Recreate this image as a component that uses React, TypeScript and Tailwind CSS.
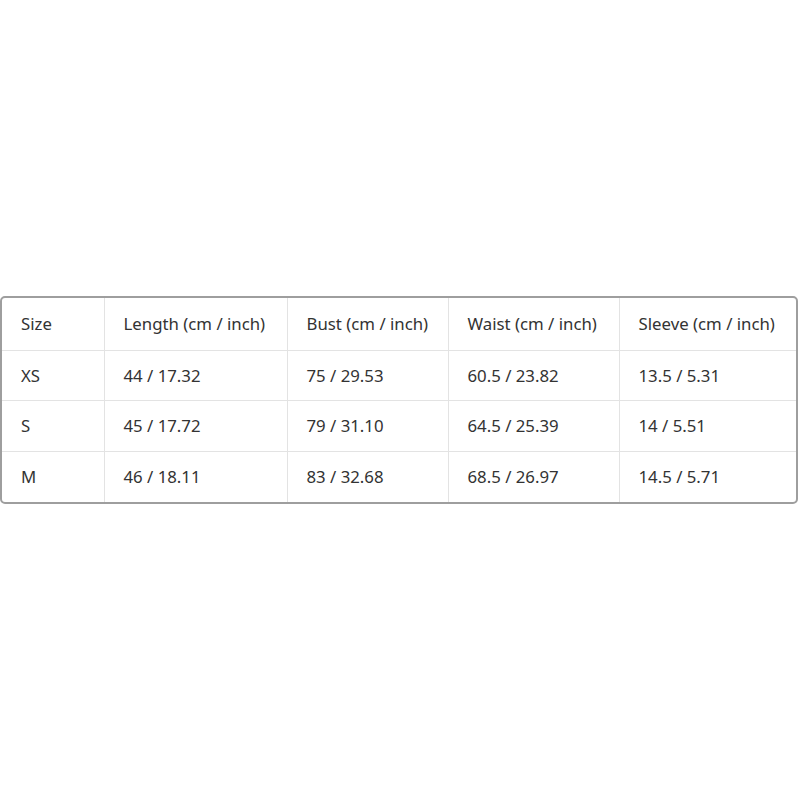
import React from "react";

const headers = ["Size", "Length (cm / inch)", "Bust (cm / inch)", "Waist (cm / inch)", "Sleeve (cm / inch)"];
const rows = [
  ["XS", "44 / 17.32", "75 / 29.53", "60.5 / 23.82", "13.5 / 5.31"],
  ["S", "45 / 17.72", "79 / 31.10", "64.5 / 25.39", "14 / 5.51"],
  ["M", "46 / 18.11", "83 / 32.68", "68.5 / 26.97", "14.5 / 5.71"],
];
const widths = ["w-[102px]", "w-[183px]", "w-[161px]", "w-[171px]", "w-[177px]"];

export default function App() {
  return (
    <div className="w-[800px] h-[800px] bg-white pt-[296px]" style={{ fontFamily: '"Noto Sans", "Open Sans", sans-serif' }}>
      <div className="w-[798px] border-2 border-[#9e9e9e] rounded-[5px] overflow-hidden bg-white">
        <table className="w-full border-collapse text-[16.8px] text-[#333333] table-fixed">
          <thead>
            <tr className="h-[52px]">
              {headers.map((h, i) => (
                <th
                  key={h}
                  className={`${widths[i]} font-normal text-left pl-[19px] border-b border-[#e3e3e3] ${i > 0 ? "border-l" : ""}`}
                >
                  {h}
                </th>
              ))}
            </tr>
          </thead>
          <tbody>
            {rows.map((r, ri) => (
              <tr key={ri} className="h-[50.5px]">
                {r.map((c, i) => (
                  <td
                    key={i}
                    className={`pl-[19px] border-[#e3e3e3] ${ri < rows.length - 1 ? "border-b" : ""} ${i > 0 ? "border-l" : ""}`}
                  >
                    {c}
                  </td>
                ))}
              </tr>
            ))}
          </tbody>
        </table>
      </div>
    </div>
  );
}
